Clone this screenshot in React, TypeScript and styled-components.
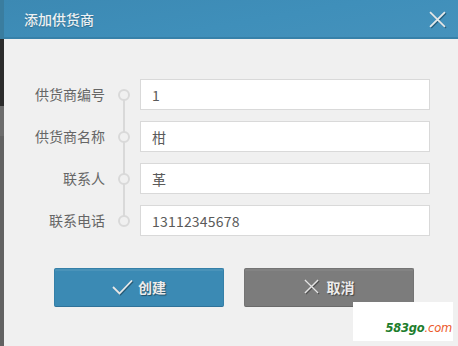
import React from 'react';
import styled, { createGlobalStyle } from 'styled-components';

const GlobalStyle = createGlobalStyle`
  html, body {
    margin: 0;
    padding: 0;
    background: #f0f0f0;
  }
  body {
    font-family: "Noto Sans CJK SC", "Liberation Sans", sans-serif;
  }
`;

const Page = styled.div`
  position: relative;
  width: 458px;
  height: 346px;
  display: flex;
  overflow: hidden;
`;

const EdgeStrip = styled.div`
  width: 4px;
  flex: none;
  background: linear-gradient(
    to bottom,
    #3a7d9f 0 39px,
    #2b2b2b 39px 106px,
    #6c6c6c 106px 136px,
    #626262 136px 100%
  );
`;

const Dialog = styled.div`
  flex: 1;
  display: flex;
  flex-direction: column;
  background: #f0f0f0;
`;

const Header = styled.div`
  height: 37px;
  display: flex;
  align-items: center;
  justify-content: space-between;
  padding: 0 11px 0 20px;
  background: linear-gradient(170deg, #3c89b3 0%, #3f8fba 55%, #4592bc 100%);
  border-bottom: 2px solid #3781a9;
`;

const Title = styled.h1`
  margin: 0;
  font-size: 14px;
  font-weight: 500;
  color: #edf2f5;
  text-shadow: 0 1px 1px rgba(0, 0, 0, 0.25);
`;

const CloseButton = styled.button`
  width: 20px;
  height: 20px;
  padding: 0;
  border: 0;
  background: none;
  cursor: pointer;
  display: flex;
  align-items: center;
  justify-content: center;
  margin-top: 1px;
  svg {
    filter: drop-shadow(1px 1px 0 rgba(20, 60, 85, 0.6));
  }
`;

const Form = styled.div`
  position: relative;
  display: flex;
  flex-direction: column;
  gap: 11px;
  padding-top: 40px;
  &::before {
    content: '';
    position: absolute;
    left: 119px;
    top: 56px;
    height: 126px;
    width: 2px;
    background: #d9d9d9;
  }
`;

const Row = styled.div`
  display: grid;
  grid-template-columns: 101px 35px 290px;
  align-items: center;
  height: 31px;
`;

const Label = styled.label`
  text-align: right;
  font-size: 14px;
  color: #666;
  line-height: 31px;
`;

const Dot = styled.span`
  position: relative;
  z-index: 1;
  justify-self: start;
  margin-left: 13px;
  width: 8px;
  height: 8px;
  border: 2px solid #d9d9d9;
  border-radius: 50%;
  background: #f0f0f0;
`;

const Input = styled.input`
  box-sizing: border-box;
  width: 290px;
  height: 31px;
  border: 1px solid #d9d9d9;
  background: #fff;
  padding: 0 11px;
  font-family: "Noto Sans CJK SC", "Liberation Sans", sans-serif;
  font-size: 14px;
  color: #5a5a5a;
  letter-spacing: 0.2px;
  outline: none;
`;

const Actions = styled.div`
  display: flex;
  gap: 20px;
  padding: 32px 0 0 50px;
`;

const ActionButton = styled.button<{ $tone: 'primary' | 'muted' }>`
  width: 170px;
  height: 39px;
  display: flex;
  align-items: center;
  justify-content: center;
  gap: ${p => (p.$tone === 'primary' ? '5px' : '8px')};
  padding: 0 0 2px;
  border-radius: 2px;
  cursor: pointer;
  font-family: "Noto Sans CJK SC", "Liberation Sans", sans-serif;
  font-size: 14px;
  font-weight: 700;
  color: #ececec;
  text-shadow: 1px 1px 1px rgba(0, 0, 0, 0.45);
  background: ${p => (p.$tone === 'primary' ? '#3b8ab4' : '#7c7c7c')};
  border: 1px solid ${p => (p.$tone === 'primary' ? '#3580a8' : '#747474')};
  border-bottom-color: ${p => (p.$tone === 'primary' ? '#2f7299' : '#6a6a6a')};
  box-shadow: inset 0 2px 0 ${p => (p.$tone === 'primary' ? 'rgba(255,255,255,0.08)' : 'rgba(255,255,255,0.06)')};
  svg {
    filter: drop-shadow(1px 1px 0 rgba(0, 0, 0, 0.35));
  }
`;

const Watermark = styled.div`
  position: absolute;
  left: 353px;
  top: 302px;
  width: 100px;
  height: 39px;
  background: #fff;
  display: flex;
  align-items: flex-end;
  justify-content: flex-end;
  padding: 0 1px 6px 0;
  box-sizing: border-box;
  font-family: "DejaVu Sans", sans-serif;
  font-style: italic;
  font-size: 11.5px;
  letter-spacing: -0.2px;
`;

const MarkGreen = styled.span`
  color: #1d7d2c;
  font-weight: 700;
`;

const MarkRed = styled.span`
  color: #ec5a2c;
`;

const fields = [
  { label: '供货商编号', value: '1' },
  { label: '供货商名称', value: '柑' },
  { label: '联系人', value: '革' },
  { label: '联系电话', value: '13112345678' },
];

const CheckIcon = () => (
  <svg width="21" height="16" viewBox="0 0 21 16" fill="none">
    <path d="M1 8 L7.5 14.5 L20 1.5" stroke="#e8e8e8" strokeWidth="1.8" />
  </svg>
);

const CrossIcon = ({ size, color, weight }: { size: number; color: string; weight: number }) => (
  <svg width={size} height={size} viewBox="0 0 16 16" fill="none">
    <path d="M1 1 L15 15 M15 1 L1 15" stroke={color} strokeWidth={weight} />
  </svg>
);

const App = () => (
  <Page>
    <GlobalStyle />
    <EdgeStrip />
    <Dialog>
      <Header>
        <Title>添加供货商</Title>
        <CloseButton aria-label="关闭">
          <CrossIcon size={17} color="#e4e8ea" weight={1.7} />
        </CloseButton>
      </Header>
      <Form>
        {fields.map(f => (
          <Row key={f.label}>
            <Label>{f.label}</Label>
            <Dot />
            <Input defaultValue={f.value} />
          </Row>
        ))}
      </Form>
      <Actions>
        <ActionButton $tone="primary">
          <CheckIcon />
          创建
        </ActionButton>
        <ActionButton $tone="muted">
          <CrossIcon size={15} color="#e4e4e4" weight={1.5} />
          取消
        </ActionButton>
      </Actions>
    </Dialog>
    <Watermark>
      <MarkGreen>583go</MarkGreen>
      <MarkRed>.com</MarkRed>
    </Watermark>
  </Page>
);

export default App;
